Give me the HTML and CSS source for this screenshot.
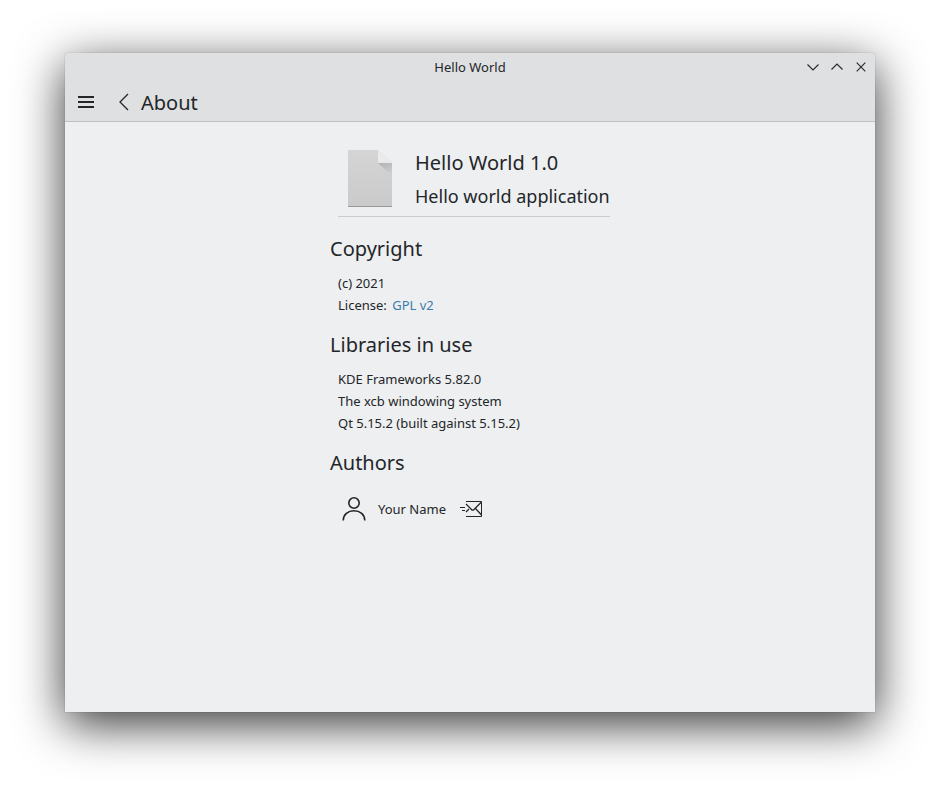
FILE: index.html
```html
<!DOCTYPE html>
<html lang="en">
<head>
<meta charset="utf-8">
<title>Hello World</title>
<link rel="stylesheet" href="styles.css">
</head>
<body>
<div class="window">
  <header class="header">
    <div class="titlebar">
      <span class="title">Hello World</span>
      <div class="controls">
        <svg width="16" height="16" viewBox="0 0 16 16"><path d="M2.500 5.500 8 11l5.500-5.500"/></svg>
        <svg width="16" height="16" viewBox="0 0 16 16"><path d="M2.500 10.500 8 5l5.500 5.500"/></svg>
        <svg width="16" height="16" viewBox="0 0 16 16"><path d="m3.700 3.700 8.600 8.600m0-8.600-8.600 8.600"/></svg>
      </div>
    </div>
    <div class="toolbar">
      <svg class="menu" width="16" height="16" viewBox="0 0 16 16"><path d="M0 2h16v2H0zM0 7h16v2H0zM0 12h16v2H0z"/></svg>
      <svg class="back" width="12" height="18" viewBox="0 0 12 18"><path d="M10 1 2 9l8 8"/></svg>
      <h1>About</h1>
    </div>
  </header>
  <main class="page">
    <section class="app">
      <svg class="document" width="44" height="57" viewBox="0 0 44 57">
        <defs>
          <linearGradient id="paper" x1="0" y1="0" x2="0" y2="1"><stop stop-color="#d5d5d5"/><stop offset="1" stop-color="#cacaca"/></linearGradient>
          <linearGradient id="shade" x1="34" y1="11" x2="40" y2="24" gradientUnits="userSpaceOnUse"><stop stop-color="#b0b0b0"/><stop offset="1" stop-color="#cecece"/></linearGradient>
        </defs>
        <path fill="url(#paper)" d="M0 0h30l14 13v44H0z"/>
        <path fill="url(#shade)" d="M30 13h14v13z"/>
        <path fill="#eaeaea" d="M30 0v13h14z"/>
        <path fill="#999" d="M0 56h44v1H0z"/>
      </svg>
      <div class="names"><h2>Hello World 1.0</h2><h3>Hello world application</h3></div>
    </section>
    <section class="block">
      <h2>Copyright</h2>
      <p>(c) 2021</p>
      <p>License: <a>GPL v2</a></p>
    </section>
    <section class="block">
      <h2>Libraries in use</h2>
      <p>KDE Frameworks 5.82.0</p>
      <p>The xcb windowing system</p>
      <p>Qt 5.15.2 (built against 5.15.2)</p>
    </section>
    <section class="block">
      <h2>Authors</h2>
      <div class="author">
        <svg class="user" width="24" height="26" viewBox="0 0 24 26"><circle cx="12" cy="7" r="5.200"/><path d="M1.200 24.500C1.200 18.500 6 14.700 12 14.700s10.800 3.800 10.800 9.800"/></svg>
        <span>Your Name</span>
        <svg class="mail" width="22" height="16" viewBox="0 0 22 16"><path d="M6 .5h15.500v15H6M0 6.500h5M2 9.500h3"/><path class="fold" d="m6 3 6 6h1.500l8-8M6 11l3-3M15.500 7.500l6 6.500"/></svg>
      </div>
    </section>
  </main>
</div>
</body>
</html>
```

FILE: styles.css
```css
* { box-sizing: border-box; }
body {
  margin: 0;
  height: 789px;
  padding: 53px 65px 77px;
  overflow: hidden;
  background: #fff;
  color: #232629;
  font: 13px/22px "Noto Sans", sans-serif;
}
h1, h2, h3, p { margin: 0; font-weight: 400; }
h1, h2 { font-size: 20px; line-height: 28px; }
svg { display: block; flex: none; fill: none; stroke: #232629; }
.window {
  height: 659px;
  border-radius: 4px 4px 0 0;
  background: #eeeff1;
  box-shadow: 0 0 1px rgba(0,0,0,.5), 0 12px 48px rgba(0,0,0,.8);
}
.header {
  height: 69px;
  border-radius: 4px 4px 0 0;
  background: #dee0e2;
  border-bottom: 1px solid #bec0c2;
}
.titlebar {
  display: grid;
  grid-template-columns: 1fr auto 1fr;
  align-items: center;
  height: 28px;
}
.title { grid-column: 2; }
.controls { display: flex; gap: 8px; justify-self: end; padding-right: 6px; }
.controls svg { stroke-width: 1.1; }
.toolbar { display: flex; align-items: center; height: 42px; padding-left: 13px; }
.toolbar h1 { padding-top: 2px; }
.menu { fill: #232629; stroke: none; shape-rendering: crispEdges; }
.back { margin: 0 11px 0 24px; stroke-width: 1.3; }
.page { width: 280px; margin-left: 265px; padding-top: 26px; }
.app {
  display: flex;
  gap: 23px;
  width: 272px;
  height: 69px;
  margin: 0 0 4px 8px;
  padding-left: 10px;
  border-bottom: 1px solid #caccce;
}
.document { margin-top: 2px; stroke: none; }
.names { white-space: nowrap; }
.names h2 { padding-top: 1px; }
h3 { margin-top: 6px; font-size: 18px; line-height: 26px; }
.block { padding-top: 14px; margin-bottom: 1px; }
.block h2 { margin-bottom: 9px; }
.block p { padding-left: 8px; }
.block a { margin-left: 2px; color: #3e7cab; }
.author { display: flex; align-items: center; height: 46px; padding-left: 12px; }
.author span { margin: 0 14px 0 12px; }
.user { stroke-width: 1.6; }
.mail { stroke-width: 1; }
.fold { stroke-width: 1.25; }
```
